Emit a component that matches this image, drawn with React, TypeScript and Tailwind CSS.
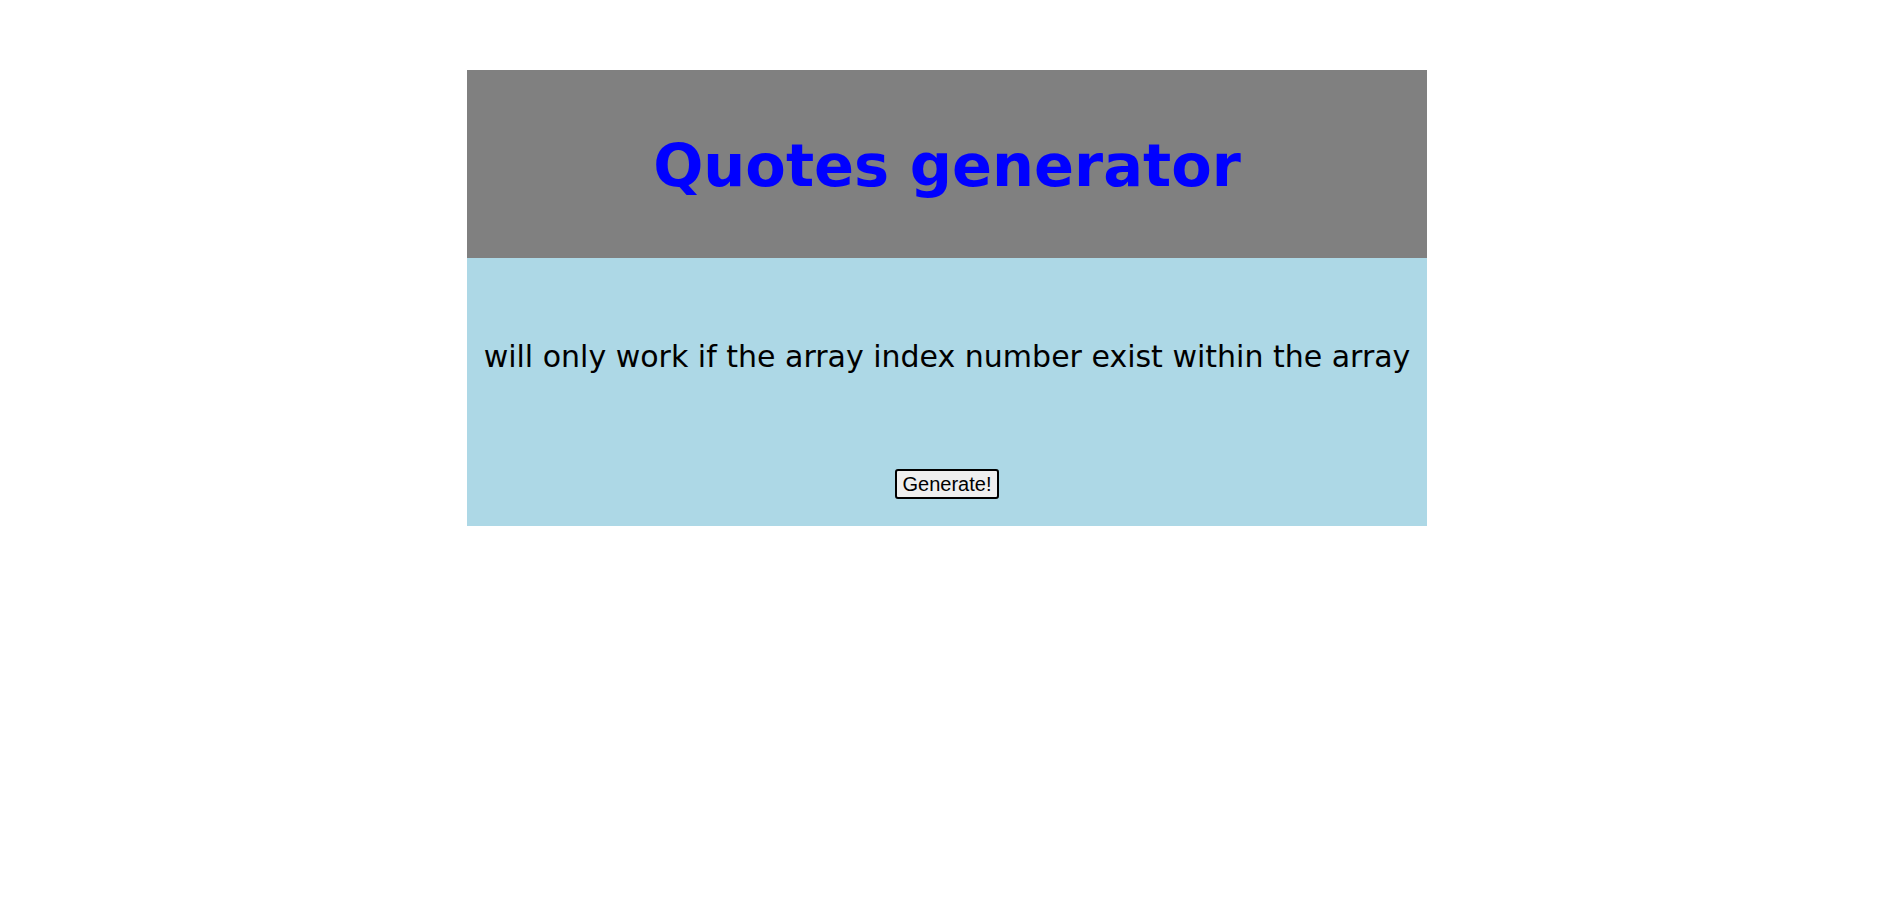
export default function App() {
  return (
    <div className="min-h-screen bg-white pt-[70px]">
      <div className="ml-[467px] w-[960px] flex flex-col">
        <div className="h-[188px] bg-[#808080] flex items-center justify-center pt-[4px]">
          <h1 className="font-['DejaVu_Sans',Verdana,sans-serif] text-[59px] font-bold text-[#0000ff]">
            Quotes generator
          </h1>
        </div>
        <div className="h-[268px] bg-[#add8e6] flex flex-col items-center">
          <p className="mt-[81px] font-['DejaVu_Sans',Verdana,sans-serif] text-[30px] leading-[36px] text-black">
            will only work if the array index number exist within the array
          </p>
          <button className="mt-[94px] px-[6px] py-px border-2 border-black rounded-[3px] bg-[#efefef] font-['Liberation_Sans',Arial,sans-serif] text-[20px] leading-[24px] text-black">
            Generate!
          </button>
        </div>
      </div>
    </div>
  );
}
